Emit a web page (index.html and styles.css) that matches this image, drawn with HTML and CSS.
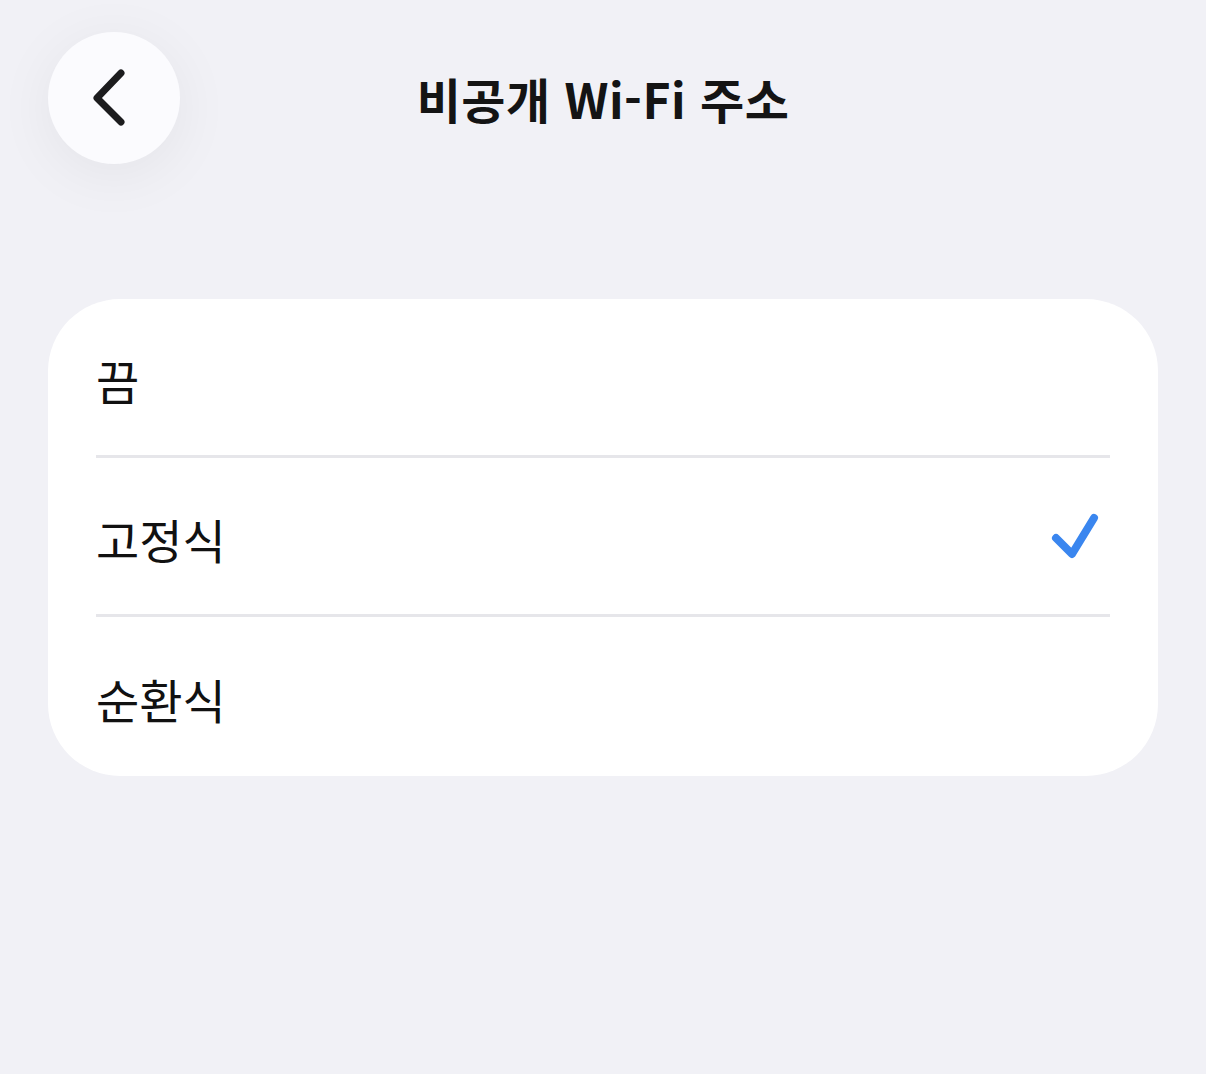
FILE: index.html
```html
<!DOCTYPE html>
<html lang="ko">
<head>
    <meta charset="UTF-8">
    <meta name="viewport" content="width=device-width, initial-scale=1.0">
    <title>비공개 Wi-Fi 주소</title>
    <link rel="stylesheet" href="styles.css">
</head>
<body>
<div class="screen">
    <header class="nav">
        <button class="back" aria-label="뒤로">
            <svg width="40" height="64" viewBox="0 0 40 64">
                <path d="M31 7 L7 32 L31 56" fill="none" stroke="#1c1c1e" stroke-width="7" stroke-linecap="round" stroke-linejoin="round"/>
            </svg>
        </button>
        <h1>비공개 Wi-Fi 주소</h1>
        <div class="spacer"></div>
    </header>

    <div class="list">
        <div class="row">
            <span>끔</span>
        </div>
        <div class="row">
            <span>고정식</span>
            <svg class="check" width="50" height="48" viewBox="0 0 50 48">
                <path d="M6 26 L22 42 L44 6" fill="none" stroke="#3a86ef" stroke-width="8" stroke-linecap="round" stroke-linejoin="round"/>
            </svg>
        </div>
        <div class="row">
            <span>순환식</span>
        </div>
    </div>
</div>
</body>
</html>
```

FILE: styles.css
```css
body {
    margin: 0;
    padding: 0;
    background-color: #f1f1f6;
    font-family: "Noto Sans CJK KR", "Noto Sans", sans-serif;
    color: #111;
}
.screen {
    width: 1206px;
    height: 1074px;
    padding: 32px 48px 0;
    box-sizing: border-box;
}
.nav {
    display: grid;
    grid-template-columns: 132px 1fr 132px;
    align-items: center;
}
.back {
    width: 132px;
    height: 132px;
    border: none;
    border-radius: 50%;
    background-color: #fbfbfe;
    box-shadow: 0 10px 60px rgba(0, 0, 0, 0.06);
    display: flex;
    align-items: center;
    justify-content: center;
    padding: 0 8px 0 0;
    cursor: pointer;
}
h1 {
    margin: 0;
    text-align: center;
    font-size: 48px;
    font-weight: 700;
    letter-spacing: 0.5px;
    color: #141414;
}
.list {
    margin-top: 135px;
    background-color: #fff;
    border-radius: 72px;
    padding: 0 48px;
}
.row {
    height: 159px;
    display: flex;
    align-items: center;
    justify-content: space-between;
    font-size: 47px;
    border-bottom: 3px solid #e6e6ea;
    box-sizing: border-box;
}
.row span {
    padding-top: 4px;
}
.row:last-child {
    border-bottom: none;
}
.check {
    margin-right: 10px;
}
```
